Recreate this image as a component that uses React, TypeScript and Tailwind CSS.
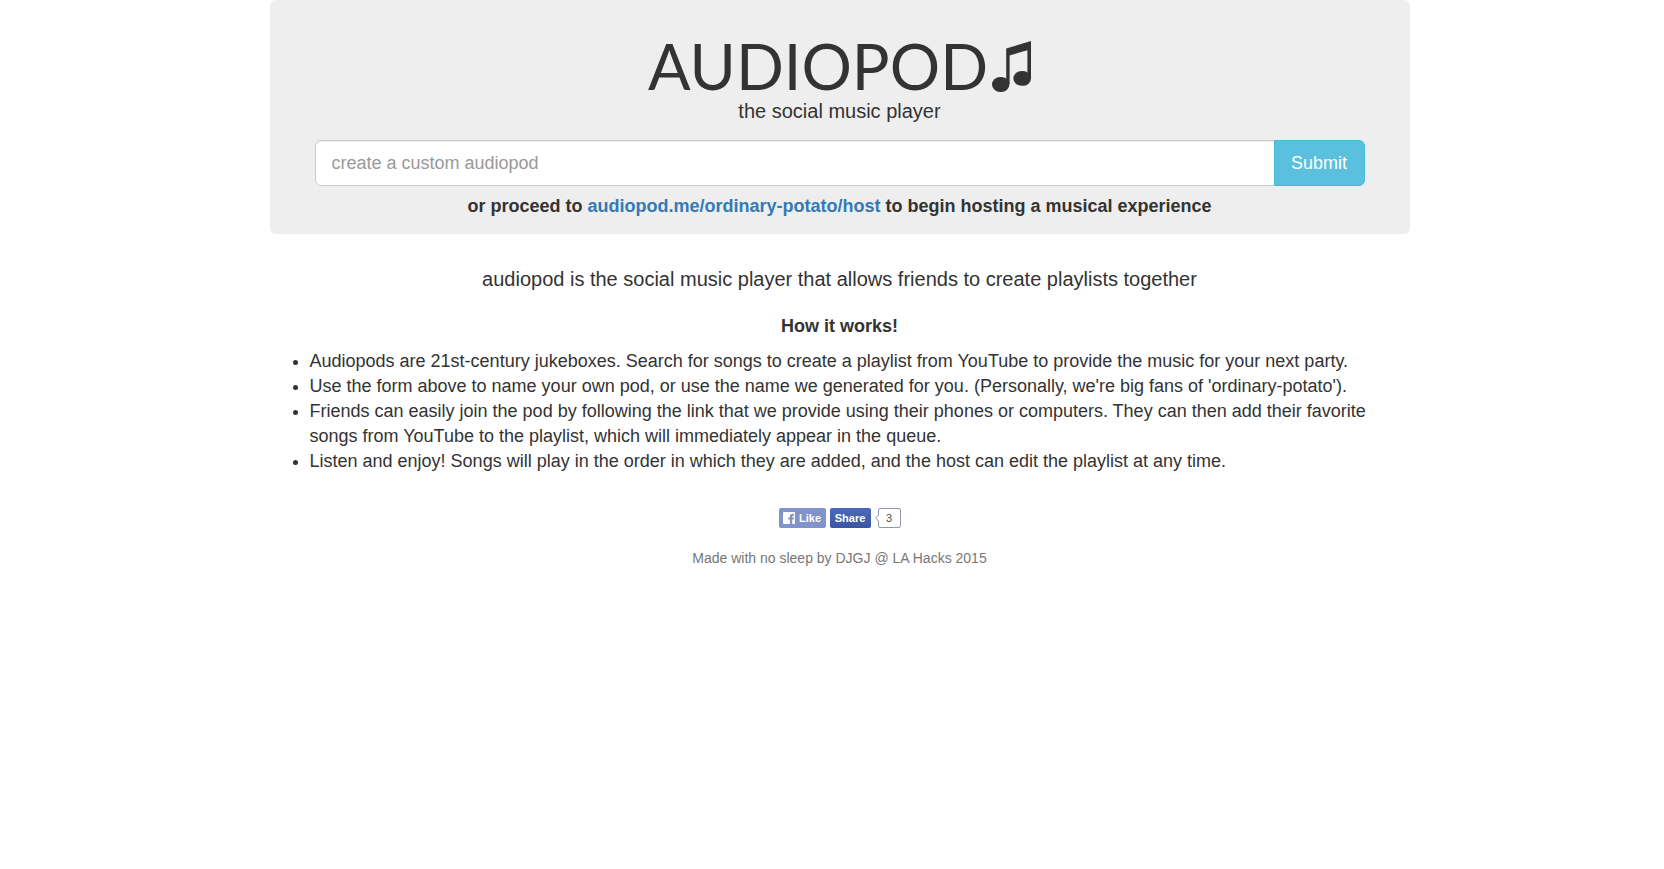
import React, { useState } from "react";

const STEPS = [
  "Audiopods are 21st-century jukeboxes. Search for songs to create a playlist from YouTube to provide the music for your next party.",
  "Use the form above to name your own pod, or use the name we generated for you. (Personally, we're big fans of 'ordinary-potato').",
  "Friends can easily join the pod by following the link that we provide using their phones or computers. They can then add their favorite songs from YouTube to the playlist, which will immediately appear in the queue.",
  "Listen and enjoy! Songs will play in the order in which they are added, and the host can edit the playlist at any time.",
];

function NoteIcon() {
  return (
    <svg width="39" height="51" viewBox="0 0 39 51" fill="#333" aria-hidden="true">
      <path d="M14.2 7.4 39 0v37h-3.6V9.2L17.6 14.4V43h-3.4z" />
      <rect x="0" y="36" width="17.4" height="15" rx="8.2" ry="7.5" />
      <rect x="21.4" y="30" width="17.6" height="14.8" rx="8.2" ry="7.4" />
    </svg>
  );
}

function FacebookIcon() {
  return (
    <svg width="12" height="12" viewBox="0 0 12 12" aria-hidden="true">
      <path
        fill="#fff"
        fillRule="evenodd"
        d="M1 0h10a1 1 0 0 1 1 1v10a1 1 0 0 1-1 1H9.2V7.6h1.5l.3-2H9.2V4.6c0-.6.3-.9.9-.9h.9V1.7H9.4C7.7 1.7 6.9 2.7 6.9 4.3v1.3H5.2v2h1.7V12H1a1 1 0 0 1-1-1V1a1 1 0 0 1 1-1z"
      />
    </svg>
  );
}

function SocialButtons() {
  return (
    <div className="flex justify-center gap-1 text-[11px] leading-5 font-bold text-white">
      <button
        type="button"
        className="flex h-5 w-[47px] items-center justify-center gap-1 rounded-xs bg-[#8094ca]"
      >
        <FacebookIcon />
        Like
      </button>
      <button
        type="button"
        className="h-5 w-[41px] rounded-xs bg-linear-to-b from-[#4c69ba] to-[#3b55a0]"
      >
        Share
      </button>
      <div className="flex items-center">
        <svg width="4" height="8" viewBox="0 0 4 8" className="relative z-10 -mr-px" aria-hidden="true">
          <path d="M4 .5.7 4 4 7.5" fill="#fff" stroke="#9197a3" />
        </svg>
        <span className="h-5 w-[23px] rounded-xs border border-[#9197a3] text-center leading-[18px] font-normal text-[#4b4f56]">
          3
        </span>
      </div>
    </div>
  );
}

export default function App() {
  const [podName, setPodName] = useState("");

  const handleSubmit = (e: React.FormEvent) => {
    e.preventDefault();
  };

  return (
    <div className="bg-white pl-[15px] font-['Liberation_Sans',Arial,sans-serif] text-lg text-[#333]">
      <div className="mx-auto max-w-[1140px]">
        {/* Jumbotron */}
        <header className="rounded-md bg-[#eee] px-[45px] pt-8 pb-4 text-center">
          <h1 className="flex items-center justify-center gap-1 font-['Lato',sans-serif] text-[63px] leading-[68px]">
            AUDIOPOD
            <NoteIcon />
          </h1>
          <p className="text-xl leading-[22px]">the social music player</p>

          <form onSubmit={handleSubmit} className="mt-[18px] flex">
            <input
              type="text"
              aria-label="Audiopod name"
              placeholder="create a custom audiopod"
              value={podName}
              onChange={(e) => setPodName(e.target.value)}
              className="h-[46px] min-w-0 flex-1 rounded-l-md border border-[#ccc] bg-white px-4 shadow-[inset_0_1px_1px_rgba(0,0,0,0.075)] placeholder:text-[#999]"
            />
            <button
              type="submit"
              className="-ml-px h-[46px] w-[91px] rounded-r-md border border-[#46b8da] bg-[#5bc0de] text-white"
            >
              Submit
            </button>
          </form>

          <p className="mt-2 leading-6 font-bold">
            or proceed to{" "}
            <a href="#host" className="text-[#337ab7]">
              audiopod.me/ordinary-potato/host
            </a>{" "}
            to begin hosting a musical experience
          </p>
        </header>

        {/* How it works */}
        <main className="pt-8">
          <p className="text-center text-xl leading-[26px]">
            audiopod is the social music player that allows friends to create playlists together
          </p>
          <h2 className="mt-6 text-center leading-5 font-bold">How it works!</h2>
          <ul className="mt-[13px] list-disc pl-10 leading-[25px]">
            {STEPS.map((step) => (
              <li key={step}>{step}</li>
            ))}
          </ul>
        </main>

        <footer className="pt-[34px]">
          <SocialButtons />
          <p className="mt-5 text-center text-sm text-[#777]">
            Made with no sleep by DJGJ @ LA Hacks 2015
          </p>
        </footer>
      </div>
    </div>
  );
}
